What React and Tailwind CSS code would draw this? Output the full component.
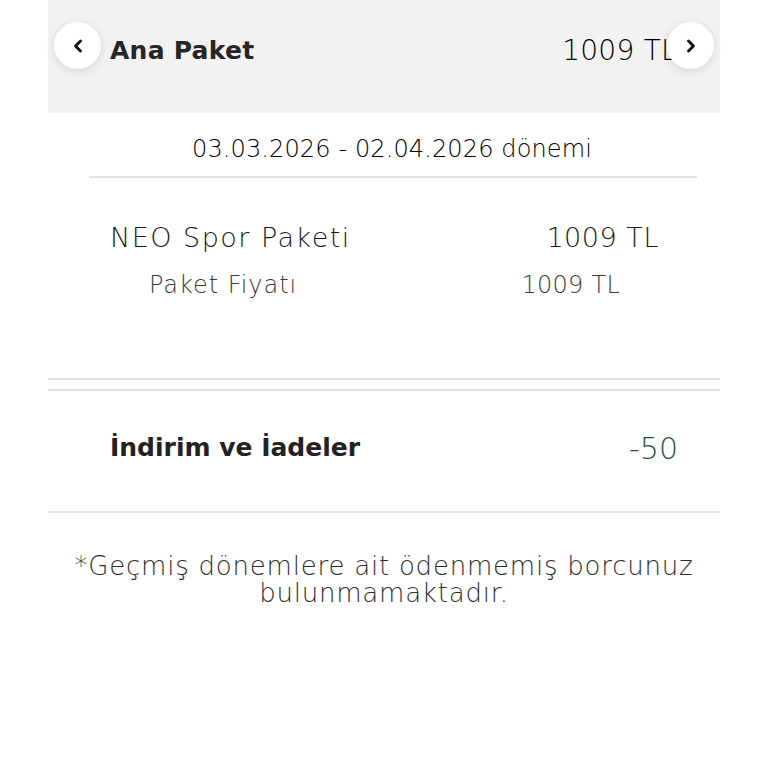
import { ChevronLeft, ChevronRight } from 'lucide-react';

const font = { fontFamily: '"DejaVu Sans", "Open Sans", sans-serif' };

export default function App() {
    return (
        <div className="bg-white min-h-screen w-[768px] text-[#111]" style={font}>
            <div className="mx-12 w-[672px]">

                {/* Paket başlığı */}
                <div className="relative h-[113px] bg-[#f2f2f2]">
                    <div className="flex items-center justify-between pl-[62px] pr-[43px] h-[102px]">
                        <span className="text-[25px] font-bold tracking-[0.01em] text-[#262626]">Ana Paket</span>
                        <span className="text-[28px] font-light tracking-[0.01em] text-black">1009 TL</span>
                    </div>
                    <button className="absolute left-[6px] top-[22px] w-[47px] h-[47px] rounded-full bg-white shadow-[0_2px_10px_rgba(0,0,0,0.12)] flex items-center justify-center">
                        <ChevronLeft size={20} strokeWidth={3.5} className="text-[#111]" />
                    </button>
                    <button className="absolute left-[619px] top-[22px] w-[47px] h-[47px] rounded-full bg-white shadow-[0_2px_10px_rgba(0,0,0,0.12)] flex items-center justify-center">
                        <ChevronRight size={20} strokeWidth={3.5} className="text-[#111]" />
                    </button>
                </div>

                {/* Dönem */}
                <div className="h-[63px] pt-[8px] pl-[16px] flex items-center justify-center text-[24px] font-light tracking-[0.005em] text-black">
                    03.03.2026 - 02.04.2026 dönemi
                </div>
                <div className="ml-[41px] mr-[23px] h-[2px] bg-[#e3e3e3]" />

                {/* Paket detayı */}
                <div className="h-[200px] pt-[42px]">
                    <div className="flex items-center justify-between pl-[62px] pr-[61px] h-[36px]">
                        <span className="text-[27px] font-light tracking-[0.055em] text-[#1a1a1a]">NEO Spor Paketi</span>
                        <span className="text-[27px] font-light tracking-[0.02em] text-[#1a1a1a]">1009 TL</span>
                    </div>
                    <div className="flex items-center justify-between pl-[101px] pr-[100px] h-[30px] mt-[14px]">
                        <span className="text-[24px] font-light tracking-[0.04em] text-[#3a3a3a]">Paket Fiyatı</span>
                        <span className="text-[24px] font-light tracking-[0.01em] text-[#3a3a3a]">1009 TL</span>
                    </div>
                </div>
                <div className="h-[2px] bg-[#e3e3e3]" />
                <div className="h-[9px]" />
                <div className="h-[2px] bg-[#e3e3e3]" />

                {/* İndirim */}
                <div className="flex items-center justify-between pl-[62px] pr-[42px] pb-[6px] h-[120px]">
                    <span className="text-[25px] font-bold text-[#222]">İndirim ve İadeler</span>
                    <span className="text-[30px] font-light text-[#2a5140]">-50</span>
                </div>
                <div className="h-[2px] bg-[#e3e3e3]" />

                {/* Not */}
                <p className="mt-[40px] text-center text-[26px] leading-[27px] font-light tracking-[0.03em] text-[#2e2e2e]">
                    *Geçmiş dönemlere ait ödenmemiş borcunuz<br />bulunmamaktadır.
                </p>

            </div>
        </div>
    );
}
